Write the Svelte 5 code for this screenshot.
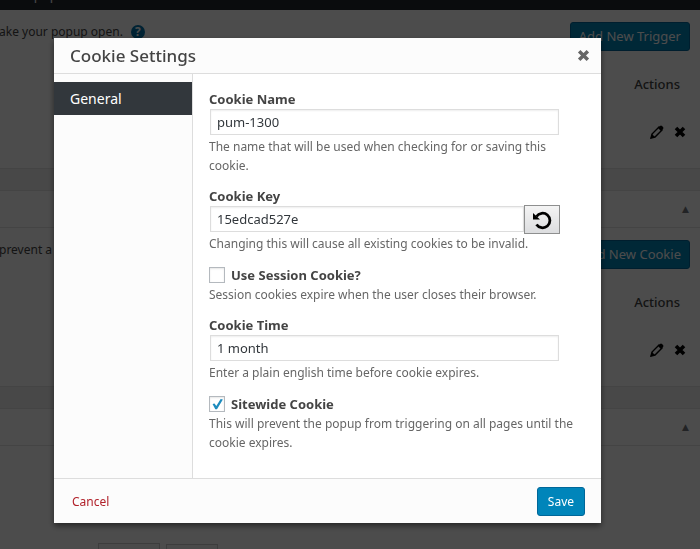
<script>
	let cookieName = "pum-1300";
	let cookieKey = "15edcad527e";
	let session = false;
	let cookieTime = "1 month";
	let sitewide = true;

	// Meta boxes on the editor page behind the modal
	const panels = [
	  { toggle: false, text: "ake your popup open.", help: true, button: "Add New Trigger" },
	  { toggle: true, text: "prevent a", help: false, button: "Add New Cookie" }
	];

	function resetKey() {
	  cookieKey = Date.now().toString(16);
	}
</script>

<style>
	:global(body) {
	  background: #f1f1f1;
	  color: #444;
	  font-family: "Noto Sans", "Open Sans", sans-serif;
	  font-size: 12px;
	  overflow: hidden;
	}

	button,
	input {
	  font-family: inherit;
	}

	.adminbar {
	  background: #23282d;
	  color: #eee;
	  height: 10px;
	  overflow: hidden;
	  padding-left: 18px;
	  font-size: 13px;
	}

	.adminbar span {
	  display: block;
	  line-height: 14px;
	  margin-top: -12px;
	}

	.panels {
	  display: flex;
	  flex-direction: column;
	  gap: 21px;
	}

	.panel {
	  background: #fff;
	  border-bottom: 1px solid #e5e5e5;
	}

	.handle {
	  border: 1px solid #e5e5e5;
	  border-width: 1px 0;
	  height: 36px;
	  display: flex;
	  align-items: center;
	  justify-content: flex-end;
	  padding-right: 11px;
	}

	.toggle {
	  border: 0;
	  background: none;
	  padding: 0;
	  color: #72777c;
	  font-family: "DejaVu Sans", sans-serif;
	  font-size: 9px;
	  line-height: 10px;
	}

	.inside {
	  padding: 12px 10px 29px 0;
	}

	.intro {
	  display: flex;
	  justify-content: space-between;
	  align-items: flex-start;
	  height: 49px;
	}

	.intro p {
	  margin: 0 0 0 -1px;
	  line-height: 20px;
	  display: flex;
	  align-items: center;
	  gap: 8px;
	}

	.help {
	  width: 14px;
	  height: 14px;
	  border-radius: 50%;
	  background: #0073aa;
	  color: #fff;
	  font-size: 12px;
	  font-weight: bold;
	  line-height: 14px;
	  text-align: center;
	}

	.primary {
	  background: #0085ba;
	  border: 1px solid #006799;
	  border-radius: 3px;
	  color: #fff;
	  font-size: 12px;
	  height: 29px;
	  padding: 0 10px;
	}

	.add {
	  font-size: 13px;
	  padding: 0 8px 2px;
	}

	.row-actions {
	  display: flex;
	  flex-direction: column;
	  align-items: flex-end;
	  gap: 28px;
	}

	.row-actions strong {
	  font-size: 13px;
	  font-weight: 500;
	  line-height: 26px;
	  margin-right: 10px;
	}

	.icons {
	  display: flex;
	  gap: 9px;
	  margin-right: 3px;
	}

	.icons button,
	.close {
	  border: 0;
	  background: none;
	  padding: 0;
	  display: flex;
	}

	.tabs {
	  display: flex;
	  gap: 6px;
	  padding: 97px 0 0 98px;
	}

	.tabs span {
	  border: 1px solid #ccc;
	  width: 60px;
	  height: 8px;
	  background: #f7f7f7;
	}

	.tabs span + span {
	  width: 50px;
	  margin-top: 1px;
	}

	/* MODAL */
	.overlay {
	  position: fixed;
	  inset: 0;
	  background: rgba(0, 0, 0, 0.7);
	  padding: 38px 99px 26px 54px;
	}

	.modal {
	  background: #fff;
	  box-shadow: 0 3px 6px rgba(0, 0, 0, 0.5);
	}

	header {
	  display: flex;
	  align-items: center;
	  justify-content: space-between;
	  background: #fcfcfc;
	  border-bottom: 1px solid #ddd;
	  height: 35px;
	  padding: 0 11px 0 16px;
	}

	h2 {
	  margin: 0;
	  font-size: 17px;
	  font-weight: 500;
	  line-height: 24px;
	}

	.columns {
	  display: grid;
	  grid-template-columns: 139px 1fr;
	}

	nav {
	  background: #fcfcfc;
	  border-right: 1px solid #ddd;
	  padding-top: 8px;
	}

	nav a {
	  display: block;
	  background: #32373c;
	  color: #fff;
	  font-size: 14px;
	  line-height: 33px;
	  padding-left: 16px;
	  text-decoration: none;
	}

	.fields {
	  display: flex;
	  flex-direction: column;
	  gap: 12px;
	  padding: 16px 20px 26px 16px;
	}

	.field label {
	  display: block;
	  font-size: 13px;
	  font-weight: bold;
	  line-height: 18px;
	}

	.field input[type="text"] {
	  box-sizing: border-box;
	  display: block;
	  width: calc(94% - 1px);
	  height: 26px;
	  margin: 1px 1px 2px;
	  padding: 0 6px;
	  border: 1px solid #ddd;
	  box-shadow: inset 0 1px 2px rgba(0, 0, 0, 0.07);
	  color: #32373c;
	  font-size: 13px;
	  outline: none;
	}

	.field p {
	  margin: 0;
	  color: #666;
	  line-height: 19px;
	}

	.group {
	  display: flex;
	  align-items: center;
	  width: 94%;
	  height: 29px;
	}

	.group input[type="text"] {
	  flex: 1;
	  min-width: 0;
	  margin-right: 0;
	}

	.reset {
	  flex: none;
	  display: flex;
	  align-items: center;
	  justify-content: center;
	  width: 36px;
	  height: 29px;
	  margin-right: -1px;
	  padding: 0;
	  border: 1px solid #8e8f8f;
	  background: linear-gradient(#f4f4f4, #dcdddf);
	}

	.field .check {
	  display: flex;
	  align-items: center;
	  gap: 6px;
	  line-height: 20px;
	}

	.check input {
	  appearance: none;
	  box-sizing: border-box;
	  width: 16px;
	  height: 16px;
	  margin: 0;
	  border: 1px solid #b4b9be;
	  background: #fff;
	  box-shadow: inset 0 1px 2px rgba(0, 0, 0, 0.1);
	}

	.check input:checked::before {
	  content: "";
	  display: block;
	  width: 14px;
	  height: 14px;
	  background: #1e8cbe;
	  clip-path: polygon(18% 50%, 32% 46%, 45% 65%, 76% 14%, 92% 18%, 50% 88%, 38% 88%);
	}

	footer {
	  display: flex;
	  align-items: center;
	  justify-content: space-between;
	  background: #fcfcfc;
	  border-top: 1px solid #ddd;
	  height: 44px;
	  padding: 0 16px 0 18px;
	}

	.cancel {
	  border: 0;
	  background: none;
	  padding: 0;
	  color: #b1212a;
	  font-size: 12px;
	}
</style>

<div class="adminbar"><span>Popup</span></div>

<div class="panels">
	{#each panels as panel}
		<section class="panel">
			{#if panel.toggle}
				<div class="handle"><button class="toggle" aria-label="Toggle panel">▲</button></div>
			{/if}
			<div class="inside">
				<div class="intro">
					<p>
						{panel.text}
						{#if panel.help}<span class="help">?</span>{/if}
					</p>
					<button class="primary add">{panel.button}</button>
				</div>
				<div class="row-actions">
					<strong>Actions</strong>
					<div class="icons">
						<button aria-label="Edit">
							<svg width="14" height="14" viewBox="0 0 14 14">
								<path d="M1 13 L2 9 L9 2 L12 5 L5 12 Z" fill="none" stroke="#000" stroke-width="1.4" />
								<path d="M8 3 L10 1 Q11 0 12 1 L13 2 Q14 3 13 4 L11 6 Z M0.5 13.5 L2 9 L5 12 Z" />
							</svg>
						</button>
						<button aria-label="Delete">
							<svg width="14" height="14" viewBox="0 0 14 14">
								<path d="M3 3 L11 11 M11 3 L3 11" stroke="#000" stroke-width="3.6" />
							</svg>
						</button>
					</div>
				</div>
			</div>
		</section>
	{/each}

	<section class="panel">
		<div class="handle"><button class="toggle" aria-label="Toggle panel">▲</button></div>
		<div class="tabs"><span></span><span></span></div>
	</section>
</div>

<div class="overlay">
	<div class="modal" role="dialog" aria-labelledby="modal-title">
		<header>
			<h2 id="modal-title">Cookie Settings</h2>
			<button class="close" aria-label="Close">
				<svg width="13" height="13" viewBox="0 0 12 12">
					<path d="M2 2 L10 10 M10 2 L2 10" stroke="#666" stroke-width="3.2" />
				</svg>
			</button>
		</header>

		<div class="columns">
			<nav><a href="#general">General</a></nav>

			<div class="fields">
				<div class="field">
					<label for="name">Cookie Name</label>
					<input id="name" type="text" bind:value={cookieName} />
					<p>The name that will be used when checking for or saving this cookie.</p>
				</div>

				<div class="field">
					<label for="key">Cookie Key</label>
					<div class="group">
						<input id="key" type="text" bind:value={cookieKey} />
						<button class="reset" aria-label="Reset key" on:click={resetKey}>
							<svg width="20" height="20" viewBox="0 0 20 20">
								<path d="M4.5 6.5 A7.3 7.3 0 1 1 4.5 14.5" fill="none" stroke="#000" stroke-width="2.8" />
								<path d="M1 3 L1 9.5 L8 9.5 Z" />
							</svg>
						</button>
					</div>
					<p>Changing this will cause all existing cookies to be invalid.</p>
				</div>

				<div class="field">
					<label class="check"><input type="checkbox" bind:checked={session} />Use Session Cookie?</label>
					<p>Session cookies expire when the user closes their browser.</p>
				</div>

				<div class="field">
					<label for="time">Cookie Time</label>
					<input id="time" type="text" bind:value={cookieTime} />
					<p>Enter a plain english time before cookie expires.</p>
				</div>

				<div class="field">
					<label class="check"><input type="checkbox" bind:checked={sitewide} />Sitewide Cookie</label>
					<p>This will prevent the popup from triggering on all pages until the cookie expires.</p>
				</div>
			</div>
		</div>

		<footer>
			<button class="cancel">Cancel</button>
			<button class="primary">Save</button>
		</footer>
	</div>
</div>
